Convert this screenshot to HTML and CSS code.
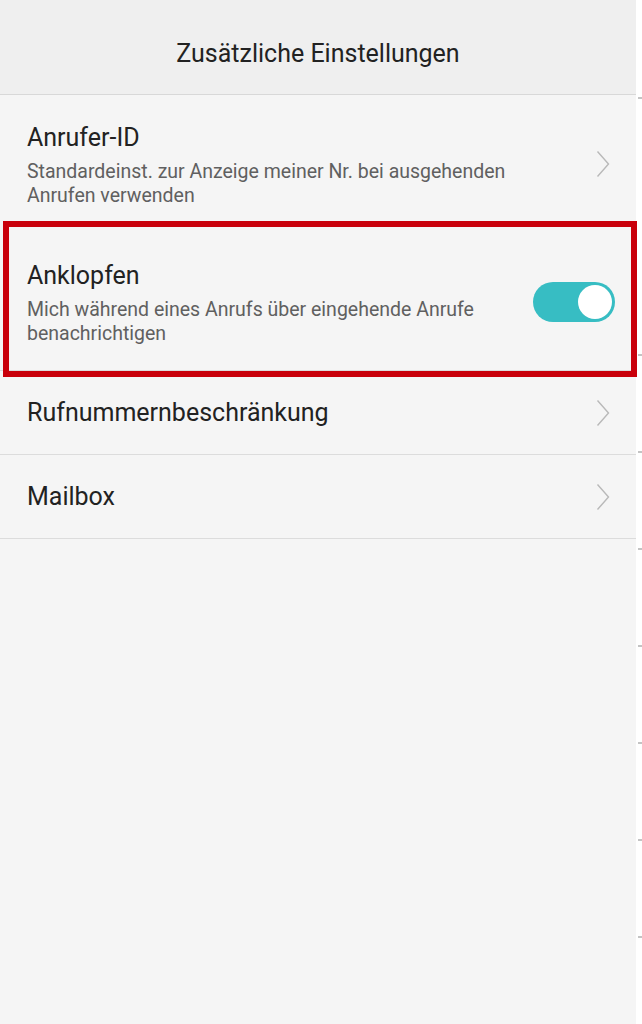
FILE: index.html
```html
<!DOCTYPE html>
<html lang="de">
<head>
    <meta charset="UTF-8" />
    <meta name="viewport" content="width=device-width, initial-scale=1" />
    <title>Zusätzliche Einstellungen</title>
    <link rel="stylesheet" href="styles.css">
</head>
<body>
    <div class="screen">
        <header class="topbar">
            <h1>Zusätzliche Einstellungen</h1>
        </header>

        <ul class="settings">
            <li class="row row-double no-line">
                <div class="row-text">
                    <span class="row-title">Anrufer-ID</span>
                    <span class="row-sub">Standardeinst. zur Anzeige meiner Nr. bei ausgehenden Anrufen verwenden</span>
                </div>
                <svg class="chevron" width="14" height="28" viewBox="0 0 14 28">
                    <path d="M1.5 1.5 L12.5 14 L1.5 26.5" fill="none" stroke="#b9b9b9" stroke-width="1.4"/>
                </svg>
            </li>
            <li class="row row-double row-marked">
                <div class="row-text">
                    <span class="row-title">Anklopfen</span>
                    <span class="row-sub">Mich während eines Anrufs über eingehende Anrufe benachrichtigen</span>
                </div>
                <div class="switch on"><span class="knob"></span></div>
            </li>
            <li class="row">
                <div class="row-text">
                    <span class="row-title">Rufnummernbeschränkung</span>
                </div>
                <svg class="chevron" width="14" height="28" viewBox="0 0 14 28">
                    <path d="M1.5 1.5 L12.5 14 L1.5 26.5" fill="none" stroke="#b9b9b9" stroke-width="1.4"/>
                </svg>
            </li>
            <li class="row">
                <div class="row-text">
                    <span class="row-title">Mailbox</span>
                </div>
                <svg class="chevron" width="14" height="28" viewBox="0 0 14 28">
                    <path d="M1.5 1.5 L12.5 14 L1.5 26.5" fill="none" stroke="#b9b9b9" stroke-width="1.4"/>
                </svg>
            </li>
        </ul>
    </div>

    <div class="edge">
        <span class="tick first"></span>
        <span class="tick gap-big"></span>
        <span class="tick"></span>
        <span class="tick"></span>
        <span class="tick"></span>
        <span class="tick"></span>
        <span class="tick"></span>
        <span class="tick"></span>
    </div>
</body>
</html>
```

FILE: styles.css
```css
body {
    margin: 0;
    height: 1024px;
    display: flex;
    font-family: Roboto, "Noto Sans", Arial, sans-serif;
    background: #fff;
    overflow: hidden;
}
.screen {
    width: 636px;
    background: #f5f5f5;
}
.topbar {
    height: 94px;
    background: #efefef;
    border-bottom: 1px solid #d8d8d8;
    display: flex;
    align-items: center;
    justify-content: center;
}
.topbar h1 {
    margin: 12px 0 0 0;
    font-size: 25px;
    font-weight: 400;
    color: #222;
}
.settings {
    list-style: none;
    margin: 0;
    padding: 0;
}
.row {
    position: relative;
    height: 83px;
    display: flex;
    align-items: center;
    padding: 0 27px;
    border-bottom: 1px solid #dcdcdc;
}
.row-double {
    height: 137px;
}
.row-double .row-text {
    margin-top: 3px;
}
.row.no-line {
    border-bottom-color: transparent;
}
.row-text {
    flex: 1;
    display: flex;
    flex-direction: column;
    gap: 7px;
}
.row-title {
    font-size: 25px;
    line-height: 30px;
    color: #222;
}
.row-sub {
    font-size: 19.5px;
    line-height: 24px;
    color: #606060;
    max-width: 500px;
}
.chevron {
    margin-right: -1px;
    flex-shrink: 0;
}
.switch {
    width: 82px;
    height: 40px;
    border-radius: 20px;
    background: #37bdc3;
    margin-right: -6px;
    flex-shrink: 0;
    display: flex;
    align-items: center;
    justify-content: flex-end;
    padding: 0 3px;
    box-sizing: border-box;
}
.knob {
    width: 34px;
    height: 34px;
    border-radius: 50%;
    background: #fff;
}
/* red frame drawn over the "Anklopfen" row */
.row-marked::after {
    content: "";
    position: absolute;
    top: -12px;
    bottom: -7px;
    left: 3px;
    right: -1px;
    border: 6px solid #c9000b;
}
.edge {
    width: 6px;
    display: flex;
    flex-direction: column;
    align-items: flex-end;
}
.tick {
    width: 4px;
    height: 2px;
    background: #c4c4c4;
    margin-top: 95px;
}
.tick.first {
    margin-top: 97px;
}
.tick.gap-big {
    margin-top: 255px;
}
```
